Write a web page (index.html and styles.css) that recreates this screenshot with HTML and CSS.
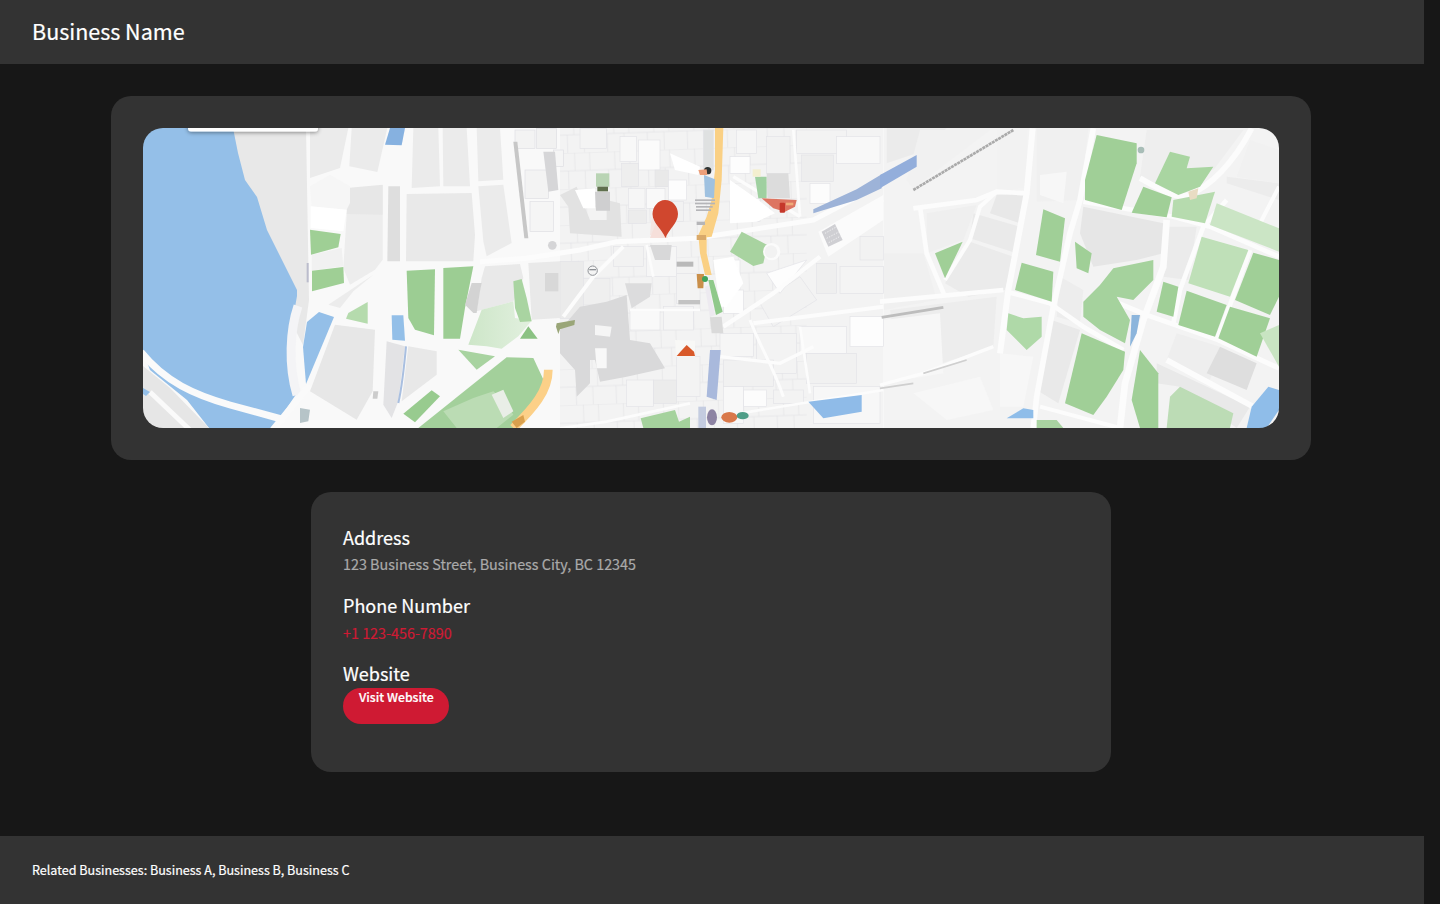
FILE: index.html
```html
<!DOCTYPE html>
<html lang="en">
<head>
<meta charset="utf-8">
<title>Business Name</title>
<link rel="stylesheet" href="styles.css">
</head>
<body>
<div class="page">
<header class="top"><h1 class="brand">Business Name</h1></header>
<main class="content">
<section class="card map-card">
<div class="map">
<svg class="map-art" viewBox="143 128 1136 300" width="1136" height="300" role="img" aria-label="Street map">
<defs>
<filter id="soft" x="0" y="0" width="100%" height="100%" color-interpolation-filters="sRGB"><feGaussianBlur stdDeviation="0.7"/><feComponentTransfer><feFuncA type="linear" slope="100"/></feComponentTransfer></filter>
<filter id="shade" x="-10%" y="-100%" width="120%" height="400%"><feDropShadow dx="0" dy="1" stdDeviation="2" flood-color="#000" flood-opacity=".45"/></filter>
<linearGradient id="parkfade" x1="0" y1="0" x2="1" y2="0"><stop offset="0" stop-color="#cde6c8"/><stop offset="1" stop-color="#e2f0df"/></linearGradient>
<pattern id="blocks" width="120" height="108" patternUnits="userSpaceOnUse" patternTransform="rotate(-2)">
<path d="M0 0H120M0 54H120M40 0V54M85 0V54M20 54V108M70 54V108" fill="none" stroke="#e2e2e6" stroke-width="2"/>
</pattern>
</defs>
<g filter="url(#soft)">
<rect x="143" y="128" width="1136" height="300" fill="#f9f9f9"/>

<!-- centre base, reference frame 480,120 at 3x -->
<g transform="translate(480 120) scale(.33333)">
<rect x="240" y="24" width="970" height="900" fill="#f3f3f3"/>
<rect x="240" y="24" width="740" height="900" fill="url(#blocks)"/>
<g stroke="#e3e3e7" stroke-width="2">
<rect x="300" y="25" width="80" height="60" fill="#f4f4f4"/>
<rect x="420" y="50" width="50" height="75" fill="#f8f8f8"/><rect x="475" y="60" width="65" height="90" fill="#fbfbfb"/>
<rect x="425" y="130" width="50" height="70" fill="#eeeeee"/><rect x="445" y="205" width="50" height="60" fill="#f6f6f6"/>
<rect x="525" y="150" width="40" height="50" fill="#e9e9e9"/><rect x="500" y="205" width="55" height="60" fill="#f9f9f9"/><rect x="565" y="180" width="55" height="60" fill="#fdfdfd"/>
<rect x="445" y="270" width="55" height="40" fill="#ececec"/><rect x="560" y="245" width="50" height="60" fill="#f2f2f2"/>
<rect x="670" y="30" width="30" height="120" fill="#dfe1e1"/>
<rect x="770" y="30" width="60" height="70" fill="#f6f6f6"/><rect x="750" y="110" width="60" height="50" fill="#fdfdfd"/>
<rect x="760" y="235" width="80" height="70" fill="#f9f9f9"/><rect x="860" y="50" width="70" height="110" fill="#f2f2f2"/><rect x="950" y="30" width="150" height="70" fill="#f3f3f3"/>
<rect x="965" y="105" width="95" height="80" fill="#eeeeee"/><rect x="1070" y="50" width="130" height="80" fill="#f8f8f8"/><rect x="990" y="190" width="60" height="60" fill="#fcfcfc"/>
<rect x="1140" y="350" width="70" height="70" fill="#f2f2f2"/><rect x="1010" y="430" width="60" height="90" fill="#efefef"/><rect x="1080" y="440" width="130" height="80" fill="#f4f4f4"/>
<rect x="1110" y="590" width="100" height="90" fill="#fdfdfd"/><rect x="960" y="620" width="140" height="80" fill="#f8f8f8"/>
<rect x="980" y="700" width="150" height="90" fill="#f1f1f1"/><rect x="830" y="640" width="120" height="120" fill="#f3f3f3"/><rect x="720" y="640" width="100" height="70" fill="#f6f6f6"/>
<rect x="730" y="720" width="150" height="80" fill="#f1f1f1"/><rect x="790" y="810" width="70" height="50" fill="#fcfcfc"/><rect x="880" y="810" width="90" height="40" fill="#f3f3f3"/>
<rect x="450" y="570" width="90" height="60" fill="#f9f9f9"/><rect x="550" y="560" width="90" height="70" fill="#f5f5f5"/><rect x="590" y="460" width="70" height="90" fill="#f3f3f3"/>
<rect x="500" y="380" width="90" height="90" fill="#f6f6f6"/><rect x="400" y="380" width="90" height="60" fill="#f2f2f2"/><rect x="240" y="425" width="70" height="170" fill="#ebebeb"/>
<rect x="310" y="475" width="80" height="80" fill="#efefef"/><rect x="590" y="710" width="70" height="120" fill="#f3f3f3"/><rect x="440" y="780" width="80" height="80" fill="#f5f5f5"/>
<rect x="520" y="780" width="70" height="70" fill="#ececec"/><rect x="720" y="420" width="60" height="90" fill="#fdfdfd"/><rect x="730" y="510" width="60" height="70" fill="#fdfdfd"/>
<rect x="1000" y="800" width="200" height="110" fill="#f7f7f7"/><rect x="730" y="800" width="60" height="110" fill="#f8f8f8"/>
<polygon points="840,550 960,470 1010,540 880,620" fill="#f2f2f2"/><polygon points="860,460 980,420 900,520" fill="#fdfdfd"/>
</g>
<polygon fill="#d9d9da" points="240,630 300,560 380,545 440,525 450,660 510,670 555,745 440,770 360,785 345,720 330,720 330,790 290,830 285,750 240,700"/>
<polygon fill="#dcdcdd" points="435,490 515,490 510,530 455,565"/>
<polygon fill="#d8d8d9" points="510,375 575,375 570,420 525,420"/>
<polygon fill="#e2e2e2" points="240,225 290,200 330,300 380,300 380,240 420,250 425,350 270,340 265,260"/>
<polygon fill="#f5f5f5" points="345,615 395,620 390,650 345,645"/>
<polygon fill="#f8f8f8" points="345,685 380,685 380,745 350,745"/>
<polygon fill="#fff" points="285,210 345,205 345,265 310,265"/>
</g>

<!-- west shore -->
<polygon fill="#e8e8e8" points="200,128 306,128 309,300 303,345 280,300 200,200"/>
<path fill="#94bfe8" d="M143 128H233L238 153L245 180L257 197L267 230L297 290L297 296L291 330L289 365L297 393L273 428H209L187 400L150 370L143 352Z"/>
<polygon fill="#e6e6e6" points="143,366 170,388 209,428 143,428"/>
<path fill="none" stroke="#fafafa" stroke-width="7" d="M141 352C165 382 195 395 230 405L285 420"/>
<path fill="none" stroke="#fafafa" stroke-width="5" d="M150 392L190 430"/>
<polygon fill="#94bfe8" points="143,388 150,392 146,396 143,394"/>
<path fill="none" stroke="#f4f4f6" stroke-width="9" d="M297 395C288 365 290 330 298 306"/>
<path fill="none" stroke="#fafafa" stroke-width="7" d="M273 430L310 385"/>

<!-- west-centre, reference frame 300,128 at 3x -->
<g transform="translate(300 128) scale(.33333)">
<g fill="#ebebeb">
<polygon points="30,0 145,0 120,120 30,150"/>
<polygon points="155,0 262,0 232,132 148,115"/>
<polygon points="340,0 415,0 420,175 335,180"/>
<polygon points="428,0 500,0 510,175 430,175"/>
<polygon points="320,198 515,195 525,320 520,400 318,400" fill="#e9e9e9"/>
<polygon points="140,258 248,170 248,395 225,425 150,470 130,420" fill="#ededed"/>
<polygon points="105,590 225,605 218,790 170,875 30,790" fill="#e7e7e7"/>
<polygon points="260,640 315,655 295,820 275,870 250,830" fill="#e3e3e5"/>
<polygon points="325,655 410,670 410,740 305,820" fill="#e8e8e8"/>
<polygon points="535,175 610,170 635,345 560,385 550,340"/>
<polygon points="530,0 600,0 610,155 535,160"/>
<polygon points="555,415 660,408 670,450 640,520 530,550 545,450" fill="#e9e9e9"/>
<polygon points="685,405 780,400 780,570 695,575" fill="#e9e9e9"/>
<polygon points="140,180 248,170 248,260 140,258" fill="#e7e7e7"/>
</g>
<polygon fill="#dedede" points="265,175 300,175 300,400 262,400"/>
<polygon fill="#d8d8d8" points="735,435 775,435 775,490 735,490"/>
<polygon fill="#f6f6f6" points="30,175 90,140 150,175 150,225 140,245 35,235"/>
<polygon fill="#fff" points="32,235 140,245 130,310 32,300"/>
<polygon fill="#f1f1f1" points="35,380 125,360 130,415 35,428"/>
<polygon fill="#ececec" points="85,530 220,440 160,490 120,540"/>

<polygon fill="#9fcf95" points="30,305 122,318 115,358 33,380"/>
<polygon fill="#9fcf95" points="36,428 130,417 132,465 36,490"/>
<polygon fill="#9ccd93" points="320,428 405,424 402,622 345,605 325,570"/>
<polygon fill="#9ccd93" points="430,420 520,415 495,540 480,632 430,632"/>
<polygon fill="#b5dbad" points="203,522 203,587 138,572 145,555"/>
<polygon fill="#a8d3a0" points="475,665 585,685 530,725"/>
<polygon fill="url(#parkfade)" points="505,650 545,545 640,520 645,570 695,578 655,625 605,662 560,655"/>
<polygon fill="#a9d4a1" points="640,460 665,453 680,510 695,580 660,582 645,540"/>
<polygon fill="#8bc283" points="685,595 713,632 660,632"/>
<polygon fill="#a3d09b" points="355,900 620,688 700,690 735,765 670,860 640,900"/>
<polygon fill="#bbdcb4" points="430,850 520,810 580,790 615,820 640,860 590,900 470,900"/>
<polygon fill="#e9eee7" points="575,800 610,785 640,850 610,870"/>
<polygon fill="#98cb8f" points="310,857 395,787 420,805 345,883"/>
<polygon fill="#86b1e0" points="270,0 315,0 305,52 255,50"/>
<polygon fill="#93bfe8" points="275,562 310,562 315,638 277,635"/>
<path fill="none" stroke="#a9bfe0" stroke-width="6" d="M318 655C312 720 305 780 295 825"/>
<polygon fill="#b6c4c8" points="0,840 30,845 25,880 0,885"/>
<path fill="none" stroke="#fcd088" stroke-width="26" d="M745 725C745 790 700 840 640 900"/>
<polygon fill="#ccc" points="220,790 235,790 232,812 218,812"/>
<rect x="20" y="405" width="6" height="58" fill="#bbbccc"/>
<polygon fill="#d3d3d3" points="515,465 545,465 540,490 530,555 520,555 495,530"/>
</g>

<polygon fill="#94bfe8" points="319,312 334,317 306,384 303,347 307,322"/>

<!-- centre detail, reference frame 480,120 at 3x -->
<g transform="translate(480 120) scale(.33333)">
<g stroke="#dfdfe3" stroke-width="2">
<rect x="105" y="30" width="60" height="55" fill="#f3f3f3"/><rect x="170" y="25" width="60" height="60" fill="#f1f1f1"/>
<rect x="135" y="150" width="70" height="85" fill="#f3f3f3"/><rect x="150" y="245" width="70" height="90" fill="#f5f5f5"/>
<rect x="220" y="90" width="30" height="50" fill="#f5f5f5"/>
</g>
<polygon fill="#c7c7c7" points="100,65 112,65 145,355 133,355"/>
<polygon fill="#d6d6d8" points="190,95 225,95 235,210 205,215"/>
<circle cx="217" cy="376" r="13" fill="#d5d5d7"/>
<g fill="none" stroke="#fcfcfc">
<path stroke-width="15" d="M0 425L140 415L300 390L410 365L650 355L1000 300L1210 190"/>
<path stroke-width="12" d="M430 380L340 470L250 590"/>
<path stroke-width="8" d="M450 570H660M500 375L520 470"/>
<path stroke-width="13" d="M1020 410L880 520L730 620"/>
<path stroke-width="12" d="M820 610L1210 560"/>
<path stroke-width="9" d="M810 600C840 680 880 740 910 830"/>
<path stroke-width="10" d="M720 710L900 730L1000 680"/>
<path stroke-width="8" d="M960 620L990 820M630 850L380 905L240 925"/>
<path stroke-width="8" d="M780 880L1210 810"/>
<path stroke-width="10" d="M760 170L960 290"/>
<path stroke-width="8" d="M940 30L960 290M1040 350L1210 240"/>
</g>
<polygon fill="#fff" points="570,100 660,140 655,165 585,150"/>
<polygon fill="#fff" points="750,180 835,240 885,280 830,305 750,310"/>
<polygon fill="#fff" points="700,420 760,410 790,490 740,560 720,560"/>

<polygon fill="#fad084" points="705,24 730,24 725,180 715,280 695,350 680,352 680,400 695,465 675,465 660,400 655,345 680,290 695,240 705,150"/>
<polygon fill="#9fc1e0" points="672,165 705,178 702,235 675,230"/>
<polygon fill="#8fc98a" points="685,480 700,480 728,575 708,585"/>
<polygon fill="#edeaf0" points="675,500 685,495 705,585 690,590"/>
<polygon fill="#dadada" points="690,592 725,590 730,640 695,640"/>
<polygon fill="#a9b9dc" points="690,690 722,690 710,840 680,830"/>
<polygon fill="#c4cce0" points="655,860 678,860 678,924 655,924"/>
<g fill="#b5b5b8"><rect x="645" y="238" width="60" height="5"/><rect x="645" y="248" width="60" height="5"/><rect x="648" y="258" width="50" height="5"/><rect x="648" y="268" width="45" height="5"/><rect x="650" y="305" width="25" height="10"/></g>
<rect x="590" y="425" width="50" height="15" fill="#b9b9b9"/><rect x="595" y="540" width="65" height="13" fill="#c3c3c3"/>
<rect x="650" y="345" width="28" height="15" fill="#d9a96a"/>

<polygon fill="#a8d3a0" points="785,335 862,375 850,430 820,438 750,395"/>
<circle cx="875" cy="395" r="26" fill="#fbfbfb"/>
<circle cx="873" cy="395" r="19" fill="#f2f2f2"/>
<polygon fill="#9fd0a0" points="825,170 860,170 860,235 835,235"/>
<polygon fill="#dcdcdc" points="860,160 925,160 930,235 862,235"/>
<polygon fill="#f4efcf" points="818,148 842,148 842,170 818,170"/>
<polygon fill="#dd7561" points="845,235 950,240 945,260 915,275 880,265"/>
<rect x="899" y="248" width="16" height="30" rx="3" fill="#c5382a"/>
<rect x="918" y="248" width="22" height="8" fill="#efac7a"/>
<polygon fill="#8fbbe8" points="985,845 1145,825 1145,875 1030,895"/>
<polygon fill="#a5d29d" points="482,895 585,870 597,905 630,890 630,924 490,924"/>
<polygon fill="#fbfbfb" points="1015,335 1210,225 1210,300 1045,410"/>
<polygon fill="#9db3d8" points="1000,268 1130,208 1205,163 1205,205 1130,240 1000,280"/>
<polygon fill="#cfcfd3" points="1025,335 1065,312 1088,360 1045,380"/>
<path fill="none" stroke="#fff" stroke-width="2" stroke-dasharray="4 4" d="M1035 340L1070 320M1040 355L1078 335M1046 368L1082 348"/>
<circle cx="338" cy="452" r="14" fill="#f4f4f4" stroke="#8e9196" stroke-width="3"/>
<rect x="328" y="447" width="20" height="4" fill="#8e9196"/>
<polygon fill="#cfcfd0" points="345,215 390,215 390,272 348,272"/>
<rect x="348" y="160" width="40" height="40" fill="#b9d4b4"/>
<rect x="352" y="200" width="32" height="14" fill="#5f6f4d"/>
<polygon fill="#f8f8f6" points="585,660 645,662 645,710 588,710"/>
<polygon fill="#d8592a" points="590,708 606,690 620,675 642,695 645,708"/>
<polygon fill="#c98f4a" points="650,462 672,462 670,505 653,505"/>
<circle cx="675" cy="477" r="9" fill="#3ea35a"/>
<polygon fill="#9aa678" points="230,610 285,600 283,615 240,628 235,642 228,620"/>
<ellipse cx="748" cy="892" rx="24" ry="16" fill="#d9784a"/>
<ellipse cx="788" cy="887" rx="18" ry="11" fill="#4f9e88"/>
<ellipse cx="696" cy="892" rx="15" ry="24" fill="#8d83a3"/>
<circle cx="683" cy="152" r="11" fill="#2f3433"/>
<polygon fill="#ec9f7a" points="655,150 680,148 682,165 660,165"/>
<polygon fill="#d9a04e" points="95,905 130,885 135,905 110,924"/>
<polygon fill="#f4e6e3" points="515,290 545,345 510,345"/>
</g>

<!-- east, reference frame 880,120 at 3x -->
<g transform="translate(880 120) scale(.33333)">
<rect x="12" y="24" width="1185" height="900" fill="#f3f3f3"/>
<polygon fill="#f0f0f0" points="470,25 625,25 600,240 470,245"/>
<polygon fill="#f7f7f7" points="480,165 560,155 550,250 480,225"/>
<polygon fill="#ebebeb" points="20,25 200,25 110,100 20,130"/>
<polygon fill="#f1f1f1" points="120,30 330,30 100,205 80,180"/>
<polygon fill="#f2f2f2" points="350,30 440,30 440,200 350,220"/>
<polygon fill="#e6e6e6" points="610,260 730,285 850,310 850,400 770,420 640,440 600,340"/>
<polygon fill="#eaeaea" points="280,280 420,320 410,400 270,355"/>
<polygon fill="#ebebeb" points="270,365 400,410 375,510 265,530 195,490"/>
<polygon fill="#efefef" points="140,280 290,255 250,360 140,400"/>
<polygon fill="#e8e8e8" points="350,225 440,220 420,310 330,280"/>
<polygon fill="#e9e9e9" points="515,600 600,630 535,850 470,810"/>
<polygon fill="#ededed" points="540,470 610,510 600,610 530,590"/>
<polygon fill="#ebebeb" points="860,320 950,320 925,480 850,470"/>
<polygon fill="#eeeeee" points="890,640 1020,680 990,780 860,720"/>
<polygon fill="#dedede" points="1020,680 1130,730 1100,810 980,760"/>
<polygon fill="#e9e9e9" points="830,730 1110,860 1070,924 900,800 830,790"/>
<polygon fill="#ececec" points="1040,170 1197,190 1197,240 1040,190"/>
<polygon fill="#eeeeee" points="800,30 1090,30 1000,150 920,145 930,110 870,95 825,190 780,170"/>
<polygon fill="#f1f1f1" points="1110,60 1197,90 1197,190 1070,170"/>
<polygon fill="#ededed" points="30,570 350,530 340,680 60,770"/>
<polygon fill="#f7f7f7" points="12,600 180,580 190,760 12,790"/>
<polygon fill="#f7f7f7" points="100,820 300,770 340,870 200,900"/>
<polygon fill="#f0f0f0" points="12,400 130,400 170,540 12,570"/>
<polygon fill="#f7f7f7" points="360,700 460,710 430,860 360,860"/>
<g fill="none" stroke="#fcfcfc">
<path stroke-width="14" d="M100 265L290 240L350 215L440 220"/>
<path stroke-width="18" d="M458 25L440 220L385 510L360 700"/>
<path stroke-width="14" d="M380 515L510 550L610 620L730 690"/>
<path stroke-width="17" d="M640 25L600 240L570 340L520 560L470 830L460 924"/>
<path stroke-width="20" d="M860 300L850 440L790 600L735 790L720 924"/>
<path stroke-width="17" d="M1115 25C1060 130 990 200 925 225C880 240 830 200 780 175"/>
<path stroke-width="14" d="M610 245L880 290L990 320L1197 410"/>
<path stroke-width="15" d="M680 535L800 585L1015 660L1197 745"/>
<path stroke-width="14" d="M1040 240L970 320L900 510L880 610"/>
<path stroke-width="14" d="M1110 390L1050 555L1010 660"/>
<path stroke-width="12" d="M1197 200L1130 330"/>
<path stroke-width="12" d="M350 215L300 260L270 360L195 480"/>
<path stroke-width="14" d="M120 260L140 400L195 530"/>
<path stroke-width="10" d="M340 680L130 760L0 795"/>
<path stroke-width="12" d="M480 860L720 924"/>
<path stroke-width="17" d="M860 720L1120 860"/>
<path stroke-width="14" d="M0 545L370 510"/>
</g>
<g fill="#a0cf97">
<polygon points="650,45 770,70 770,130 725,270 615,240 615,180"/>
<polygon points="790,200 875,232 860,292 755,278"/>
<polygon points="490,268 555,295 540,425 468,405"/>
<polygon points="425,428 520,455 515,545 405,510"/>
<polygon points="165,400 248,365 195,475"/>
<polygon points="1120,398 1197,420 1197,530 1170,585 1065,540"/>
<polygon points="920,512 1040,555 1005,650 895,615"/>
<polygon points="1050,560 1170,595 1130,710 1015,655"/>
<polygon points="850,485 895,500 880,590 830,575"/>
<polygon points="585,365 635,400 625,460 590,445"/>
<polygon points="605,640 735,695 730,750 680,830 640,885 555,850"/>
<polygon points="780,690 835,760 835,924 780,924 755,840"/>
</g>
<polygon fill="#a9d5a1" points="870,95 930,110 920,145 1000,140 960,200 895,225 825,190"/>
<polygon fill="#b6dbae" points="880,240 1005,215 975,310 875,290"/>
<polygon fill="#cbe5c5" points="1010,250 1197,325 1197,395 990,315"/>
<polygon fill="#bfe0b8" points="965,350 1105,390 1050,530 925,490"/>
<polygon fill="#c8e4c2" points="1140,640 1197,615 1197,740"/>
<polygon fill="#afd9a8" points="385,580 430,595 485,590 485,650 440,690 380,630"/>
<polygon fill="#a5d29d" points="610,545 660,495 700,445 820,420 820,480 760,540 710,530 750,600 735,670 660,630 610,590"/>
<polygon fill="#bcdcb5" points="900,800 1060,880 1050,924 860,924 870,830"/>
<polygon fill="#8fbde9" points="380,895 430,865 460,870 460,895"/>
<polygon fill="#a9d3a1" points="470,900 530,900 550,924 470,924"/>
<polygon fill="#8fbde9" points="1165,800 1197,810 1197,870 1160,924 1100,924 1115,860"/>
<polygon fill="#8cb5dc" points="755,585 780,585 770,640 750,680"/>
<polygon fill="#93aedb" points="0,165 110,105 110,140 0,205"/>
<path fill="none" stroke="#aaa" stroke-width="8" stroke-dasharray="9 2" d="M100 210L400 30"/>
<path fill="none" stroke="#bdbdbd" stroke-width="8" d="M5 592L190 562"/>
<path fill="none" stroke="#cfcfcf" stroke-width="5" d="M0 805L100 790M130 760L260 720"/>
<polygon fill="#e9dcc3" points="925,215 955,205 950,235 930,240"/>
<circle cx="783" cy="90" r="10" fill="#a8bdb7"/>
</g>
</g>

<path fill="#f6dfda" d="M656 223L668 238H650Z"/>
<path fill="#d0472e" d="M665 200C673 200 678 207 678 214C678 223 669 229 665.5 238C662 229 652.5 223 652.5 214C652.5 207 658 200 665 200Z"/>
<rect x="188" y="120" width="130" height="11.500" rx="3" fill="#fff" filter="url(#shade)"/>
</svg>
</div>
</section>
<section class="card info-card">
<div class="field"><h2 class="label">Address</h2><p class="value">123 Business Street, Business City, BC 12345</p></div>
<div class="field"><h2 class="label">Phone Number</h2><p class="value value-phone"><a class="phone" href="#">+1 123-456-7890</a></p></div>
<div class="field"><h2 class="label">Website</h2><a class="visit" href="#">Visit Website</a></div>
</section>
</main>
<footer class="bottom"><p class="related">Related Businesses: Business A, Business B, Business C</p></footer>
</div>
</body>
</html>
```

FILE: styles.css
```css
* { box-sizing: border-box; }
html, body { margin: 0; background: #171717; }
body { font-family: "Noto Sans CJK SC", "Noto Sans", sans-serif; color: #fff; -webkit-text-stroke: 0.2px; height: 904px; overflow: hidden; }
.page { width: 1424px; }
.top { height: 64px; background: #333; padding: 16px 32px; }
.brand { margin: 0; font-size: 21.5px; line-height: 30px; font-weight: 400; }
.content { display: flex; flex-direction: column; align-items: center; gap: 32px; padding: 32px 2px 64px 0; }
.card { background: #333; border-radius: 20px; padding: 32px; }
.map-card { width: 1200px; height: 364px; }
.map { height: 300px; border-radius: 20px; overflow: hidden; }
.map-art { display: block; }
.info-card { width: 800px; height: 280px; }
.field { margin-bottom: 16px; }
.label { margin: 0 0 2px; font-size: 18px; line-height: 26px; font-weight: 400; }
.value { margin: 0; font-size: 14.35px; line-height: 24px; color: #aaa; }
.value-phone { height: 24px; padding-top: 1px; }
.phone { color: #cf1a33; text-decoration: none; }
.visit { display: block; width: 106px; height: 36px; padding: 0 16px; border-radius: 18px; background: #cf1a33; color: #fff; font-size: 12.3px; line-height: 19px; font-weight: 500; text-decoration: none; white-space: nowrap; }
.bottom { height: 68px; background: #333; padding: 0 32px 2px; display: flex; align-items: center; }
.related { margin: 0; font-size: 12.55px; }
```
